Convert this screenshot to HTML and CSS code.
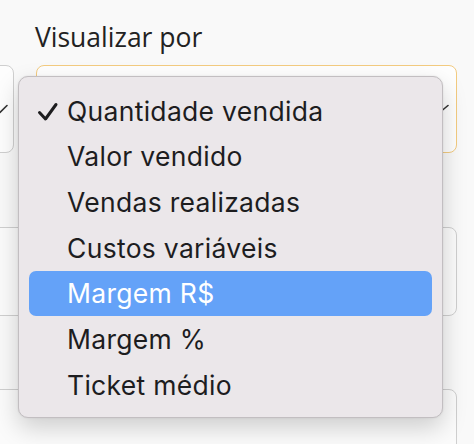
FILE: index.html
```html
<!DOCTYPE html>
<html lang="pt-BR">
<head>
<meta charset="utf-8">
<title>Visualizar por</title>
<link rel="stylesheet" href="styles.css">
</head>
<body>
<div class="page">
  <div class="form">
    <div class="side">
      <div class="box box-top">
        <svg class="chev" width="16" height="10" viewBox="0 0 16 10"><path d="M1 1.5 L8 8.5 L15 1.5" fill="none" stroke="#333" stroke-width="1.6" stroke-linecap="round" stroke-linejoin="round"/></svg>
      </div>
    </div>
    <div class="main">
      <label class="label">Visualizar por</label>
      <div class="select">
        <svg class="chev" width="20" height="10" viewBox="0 0 20 10"><path d="M1 1.5 L10 9 L19 1.5" fill="none" stroke="#333" stroke-width="1.6" stroke-linecap="round" stroke-linejoin="round"/></svg>
      </div>
    </div>
  </div>
  <div class="rows">
    <div class="row-box row-a"></div>
    <div class="row-box row-b"></div>
  </div>

  <ul class="menu">
    <li class="item checked">
      <span class="check"><svg width="22" height="20" viewBox="0 0 22 20"><path d="M2.5 10.5 L8.5 17 L19 2.5" fill="none" stroke="#1d1d1f" stroke-width="3" stroke-linecap="round" stroke-linejoin="round"/></svg></span>
      <span class="text">Quantidade vendida</span>
    </li>
    <li class="item"><span class="check"></span><span class="text">Valor vendido</span></li>
    <li class="item"><span class="check"></span><span class="text">Vendas realizadas</span></li>
    <li class="item"><span class="check"></span><span class="text">Custos variáveis</span></li>
    <li class="item active"><span class="check"></span><span class="text">Margem R$</span></li>
    <li class="item"><span class="check"></span><span class="text">Margem %</span></li>
    <li class="item"><span class="check"></span><span class="text">Ticket médio</span></li>
  </ul>
</div>
</body>
</html>
```

FILE: styles.css
```css
* { box-sizing: border-box; }
html, body {
  margin: 0;
  padding: 0;
  width: 474px;
  height: 444px;
  overflow: hidden;
  background: #f9f9f9;
}
.page {
  position: relative;
  width: 474px;
  height: 444px;
  overflow: hidden;
}
.form {
  display: flex;
  gap: 22px;
  margin-left: -60px;
}
.side {
  width: 74px;
  padding-top: 65px;
}
.box {
  height: 88px;
  border: 1.5px solid #cfcfcf;
  border-radius: 8px;
  background: #fdfdfd;
  position: relative;
}
.box .chev {
  position: absolute;
  right: 5px;
  top: 38px;
}
.main {
  width: 421px;
  display: flex;
  flex-direction: column;
}
.label {
  display: block;
  height: 65px;
  padding: 20px 0 0 0;
  font-family: "Open Sans", "Liberation Sans", sans-serif;
  font-size: 26.5px;
  font-weight: 400;
  line-height: 34px;
  color: #222;
  margin-left: -1px;
}
.select {
  height: 88px;
  border: 1.5px solid #f3cb80;
  border-radius: 8px;
  background: #fefefe;
  position: relative;
}
.select .chev {
  position: absolute;
  right: 7px;
  top: 38px;
}
.rows {
  display: flex;
  flex-direction: column;
  gap: 73px;
  margin: 74px 17px 0 -20px;
}
.row-box {
  height: 89px;
  border: 1.5px solid #cfcfcf;
  border-radius: 8px;
  background: #fbfbfb;
}
.row-b { height: 120px; }

.menu {
  position: absolute;
  left: 18px;
  top: 76px;
  width: 425px;
  height: 342px;
  margin: 0;
  padding: 11px 10px;
  list-style: none;
  background: #ebe7ea;
  border: 1px solid #c2bec1;
  border-radius: 10px;
  box-shadow: 0 10px 24px rgba(0, 0, 0, 0.18), 0 0 2px rgba(0, 0, 0, 0.1);
  font-family: "Inter", "Noto Sans", sans-serif;
  font-size: 26.5px;
  letter-spacing: 0.3px;
  color: #1d1d1f;
}
.item {
  display: flex;
  align-items: center;
  height: 45.7px;
  border-radius: 7px;
}
.check {
  width: 38px;
  flex: none;
  display: flex;
  justify-content: flex-end;
  padding-right: 8px;
  padding-top: 2px;
}
.check svg { display: block; }
.text {
  white-space: nowrap;
  line-height: 1;
}
.active {
  background: #64a2f8;
  color: #fff;
}
```
